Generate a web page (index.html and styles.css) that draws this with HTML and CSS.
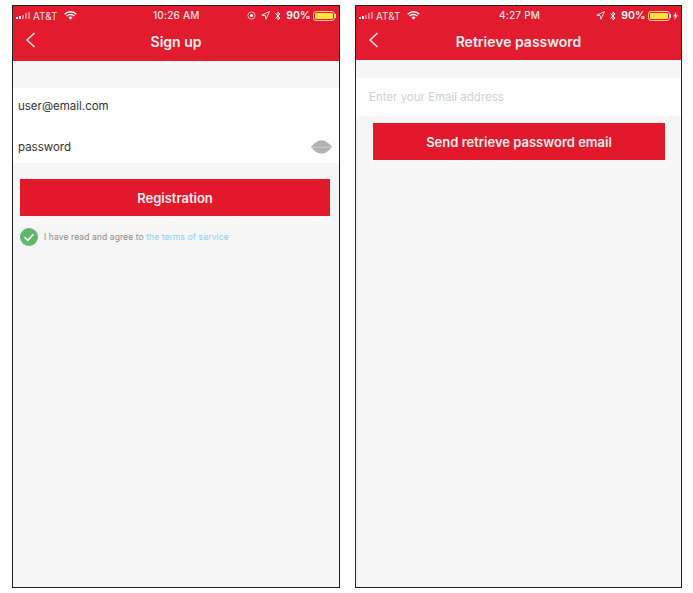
FILE: index.html
```html
<!DOCTYPE html>
<html lang="en">
<head>
<meta charset="utf-8">
<title>Sign up and retrieve password</title>
<link rel="stylesheet" href="styles.css">
</head>
<body>
<main class="stage">
  <section class="phone">
    <header class="top top-a">
      <div class="status">
        <div class="status-left">
          <svg class="signal" width="17" height="8" viewBox="0 0 17 8"><rect x="0" y="5" width="2" height="2" fill="#fff"/><rect x="3" y="4" width="2" height="3" fill="#fff"/><rect x="6" y="3" width="2" height="4" fill="#ee7a88"/><rect x="9" y="1" width="2" height="6" fill="#ee7a88"/><rect x="12" y="0" width="2" height="7" fill="#ee7a88"/></svg>
          <span>AT&amp;T</span>
          <svg class="wifi" width="13" height="9" viewBox="0 0 13 9"><path d="M.7 3.2a8.2 8.2 0 0 1 11.6 0M2.600 5a5.500 5.500 0 0 1 7.800 0" fill="none" stroke="#fff" stroke-width="1.500"/><path d="M4.400 6.600a3 3 0 0 1 4.200 0L6.500 8.800z" fill="#fff"/></svg>
        </div>
        <div class="clock">10:26 AM</div>
        <div class="status-right">
          <svg width="9" height="9" viewBox="0 0 9 9"><circle cx="4.500" cy="4.500" r="3.600" fill="none" stroke="#f5b7be" stroke-width="1"/><circle cx="4.500" cy="4.500" r="1.600" fill="#fff"/></svg>
          <svg class="gap" width="9" height="9" viewBox="0 0 9 9"><path d="M8.500.5 .8 4.200l3.500.5.6 3.600z" fill="none" stroke="#fbdde0" stroke-width="1"/></svg>
          <svg class="gap" width="6" height="10" viewBox="0 0 6 10"><path d="M.5 2.600 5 7 3 9V1l2 2L.5 7.400" fill="none" stroke="#fff" stroke-width="1"/></svg>
          <span class="pct">90%</span>
          <span class="battery"><span class="battery-fill"></span></span><span class="battery-cap"></span>
        </div>
      </div>
      <div class="nav">
        <svg class="back" width="11" height="16" viewBox="0 0 11 16"><path d="M9.500 1 2 8l7.500 7" fill="none" stroke="#fbe4e6" stroke-width="1.500"/></svg>
        <h1 class="title">Sign up</h1>
      </div>
    </header>
    <div class="spacer spacer-a"></div>
    <div class="fields">
      <div class="field field-email">user@email.com</div>
      <div class="field field-pass">
        <span>password</span>
        <svg width="21" height="14" viewBox="0 0 21 14"><path d="M0 7C4 2 7 .5 10.500 .5S17 2 21 7c-4 5-7 6.500-10.500 6.500S4 12 0 7z" fill="#b1b1b1"/><path d="M1 7.300h19" stroke="#d5d5d5" stroke-width=".8"/></svg>
      </div>
    </div>
    <button class="cta cta-a" type="button">Registration</button>
    <div class="agree">
      <svg width="18" height="18" viewBox="0 0 18 18"><circle cx="9" cy="9" r="9" fill="#5cb86a"/><path d="M4.500 9.200 7.800 12.300 13.500 6.300" fill="none" stroke="#fff" stroke-width="1.600"/></svg>
      <p class="agree-text">I have read and agree to <a class="terms">the terms of service</a></p>
    </div>
  </section>

  <section class="phone">
    <header class="top top-b">
      <div class="status">
        <div class="status-left">
          <svg class="signal" width="17" height="8" viewBox="0 0 17 8"><rect x="0" y="5" width="2" height="2" fill="#fff"/><rect x="3" y="4" width="2" height="3" fill="#fff"/><rect x="6" y="3" width="2" height="4" fill="#ee7a88"/><rect x="9" y="1" width="2" height="6" fill="#ee7a88"/><rect x="12" y="0" width="2" height="7" fill="#ee7a88"/></svg>
          <span>AT&amp;T</span>
          <svg class="wifi" width="13" height="9" viewBox="0 0 13 9"><path d="M.7 3.200a8.200 8.200 0 0 1 11.600 0M2.600 5a5.500 5.500 0 0 1 7.800 0" fill="none" stroke="#fff" stroke-width="1.500"/><path d="M4.400 6.600a3 3 0 0 1 4.200 0L6.500 8.800z" fill="#fff"/></svg>
        </div>
        <div class="clock clock-b">4:27 PM</div>
        <div class="status-right">
          <svg width="9" height="9" viewBox="0 0 9 9"><path d="M8.500.5 .8 4.200l3.500.5.6 3.600z" fill="none" stroke="#fbdde0" stroke-width="1"/></svg>
          <svg class="gap" width="6" height="10" viewBox="0 0 6 10"><path d="M.5 2.600 5 7 3 9V1l2 2L.5 7.400" fill="none" stroke="#fff" stroke-width="1"/></svg>
          <span class="pct">90%</span>
          <span class="battery"><span class="battery-fill"></span></span><span class="battery-cap"></span>
          <svg class="bolt" width="5" height="8" viewBox="0 0 5 8"><path d="M3.200 0 0 4.500h2L1.500 8 5 3.300H3z" fill="#fbdde0"/></svg>
        </div>
      </div>
      <div class="nav">
        <svg class="back" width="11" height="16" viewBox="0 0 11 16"><path d="M9.500 1 2 8l7.500 7" fill="none" stroke="#fbe4e6" stroke-width="1.500"/></svg>
        <h1 class="title">Retrieve password</h1>
      </div>
    </header>
    <div class="spacer spacer-b"></div>
    <div class="fields">
      <div class="field field-placeholder">Enter your Email address</div>
    </div>
    <button class="cta cta-b" type="button">Send retrieve password email</button>
  </section>
</main>
</body>
</html>
```

FILE: styles.css
```css
* { box-sizing: border-box; }
html, body { margin: 0; padding: 0; background: #fff; }
body { width: 693px; height: 593px; overflow: hidden; font-family: Inter, "Liberation Sans", Arial, sans-serif; }
.stage { display: flex; gap: 15px; padding: 5px 0 0 12px; }
.phone { width: 328px; height: 583px; border: 1px solid #222; background: #f6f6f6; display: flex; flex-direction: column; }
.phone + .phone { width: 327px; }
.top { background: #e21b2e; color: #fff; flex: none; }
.top-a { height: 55px; }
.top-b { height: 54px; }
.status { position: relative; display: flex; justify-content: space-between; align-items: center; height: 19px; padding: 0 3px; font-size: 10px; color: #fbe4e6; }
.status-left, .status-right { display: flex; align-items: center; }
.wifi { margin-left: 6px; }
.clock { position: absolute; left: 140px; top: 3px; line-height: 13px; letter-spacing: .2px; font-weight: 500; }
.clock-b { left: 143px; }
.gap { margin-left: 5px; }
.pct { margin-left: 5px; font-size: 10.500px; font-weight: 600; color: #fff; }
.battery { display: block; width: 22px; height: 10px; margin-left: 2px; padding: 1px; border: 1px solid #f9cfa0; border-radius: 3px; }
.battery-fill { display: block; height: 100%; background: #fde43a; border-radius: 1px; }
.battery-cap { width: 1.500px; height: 4px; background: #fbe4e6; }
.bolt { margin-left: 2px; }
.nav { position: relative; display: flex; justify-content: center; align-items: center; height: 32px; }
.back { position: absolute; left: 12px; top: 7px; }
.title { margin: 0; font-size: 14px; font-weight: 600; color: #fbeef0; }
.spacer { flex: none; }
.spacer-a { height: 27px; }
.spacer-b { height: 18px; }
.fields { flex: none; background: #fff; }
.field { display: flex; align-items: center; justify-content: space-between; padding: 0 7px 0 5px; font-size: 11.500px; color: #333; }
.field-email { height: 35px; }
.field-pass { height: 40px; padding-top: 8px; }
.field-placeholder { height: 38px; padding-left: 13px; color: #cfcfcf; }
.cta { display: block; flex: none; border: 0; background: #e2192a; color: #fbeef0; font: inherit; font-size: 13px; font-weight: 600; padding: 0; }
.cta-a { width: 310px; height: 37px; margin: 16px 0 0 7px; }
.cta-b { width: 292px; height: 37px; margin: 7px 0 0 17px; }
.agree { display: flex; align-items: center; gap: 6px; margin: 12px 0 0 7px; }
.agree-text { margin: 0; font-size: 8.500px; letter-spacing: .1px; color: #8b8b8b; }
.terms { color: #8fd0ee; }
```
